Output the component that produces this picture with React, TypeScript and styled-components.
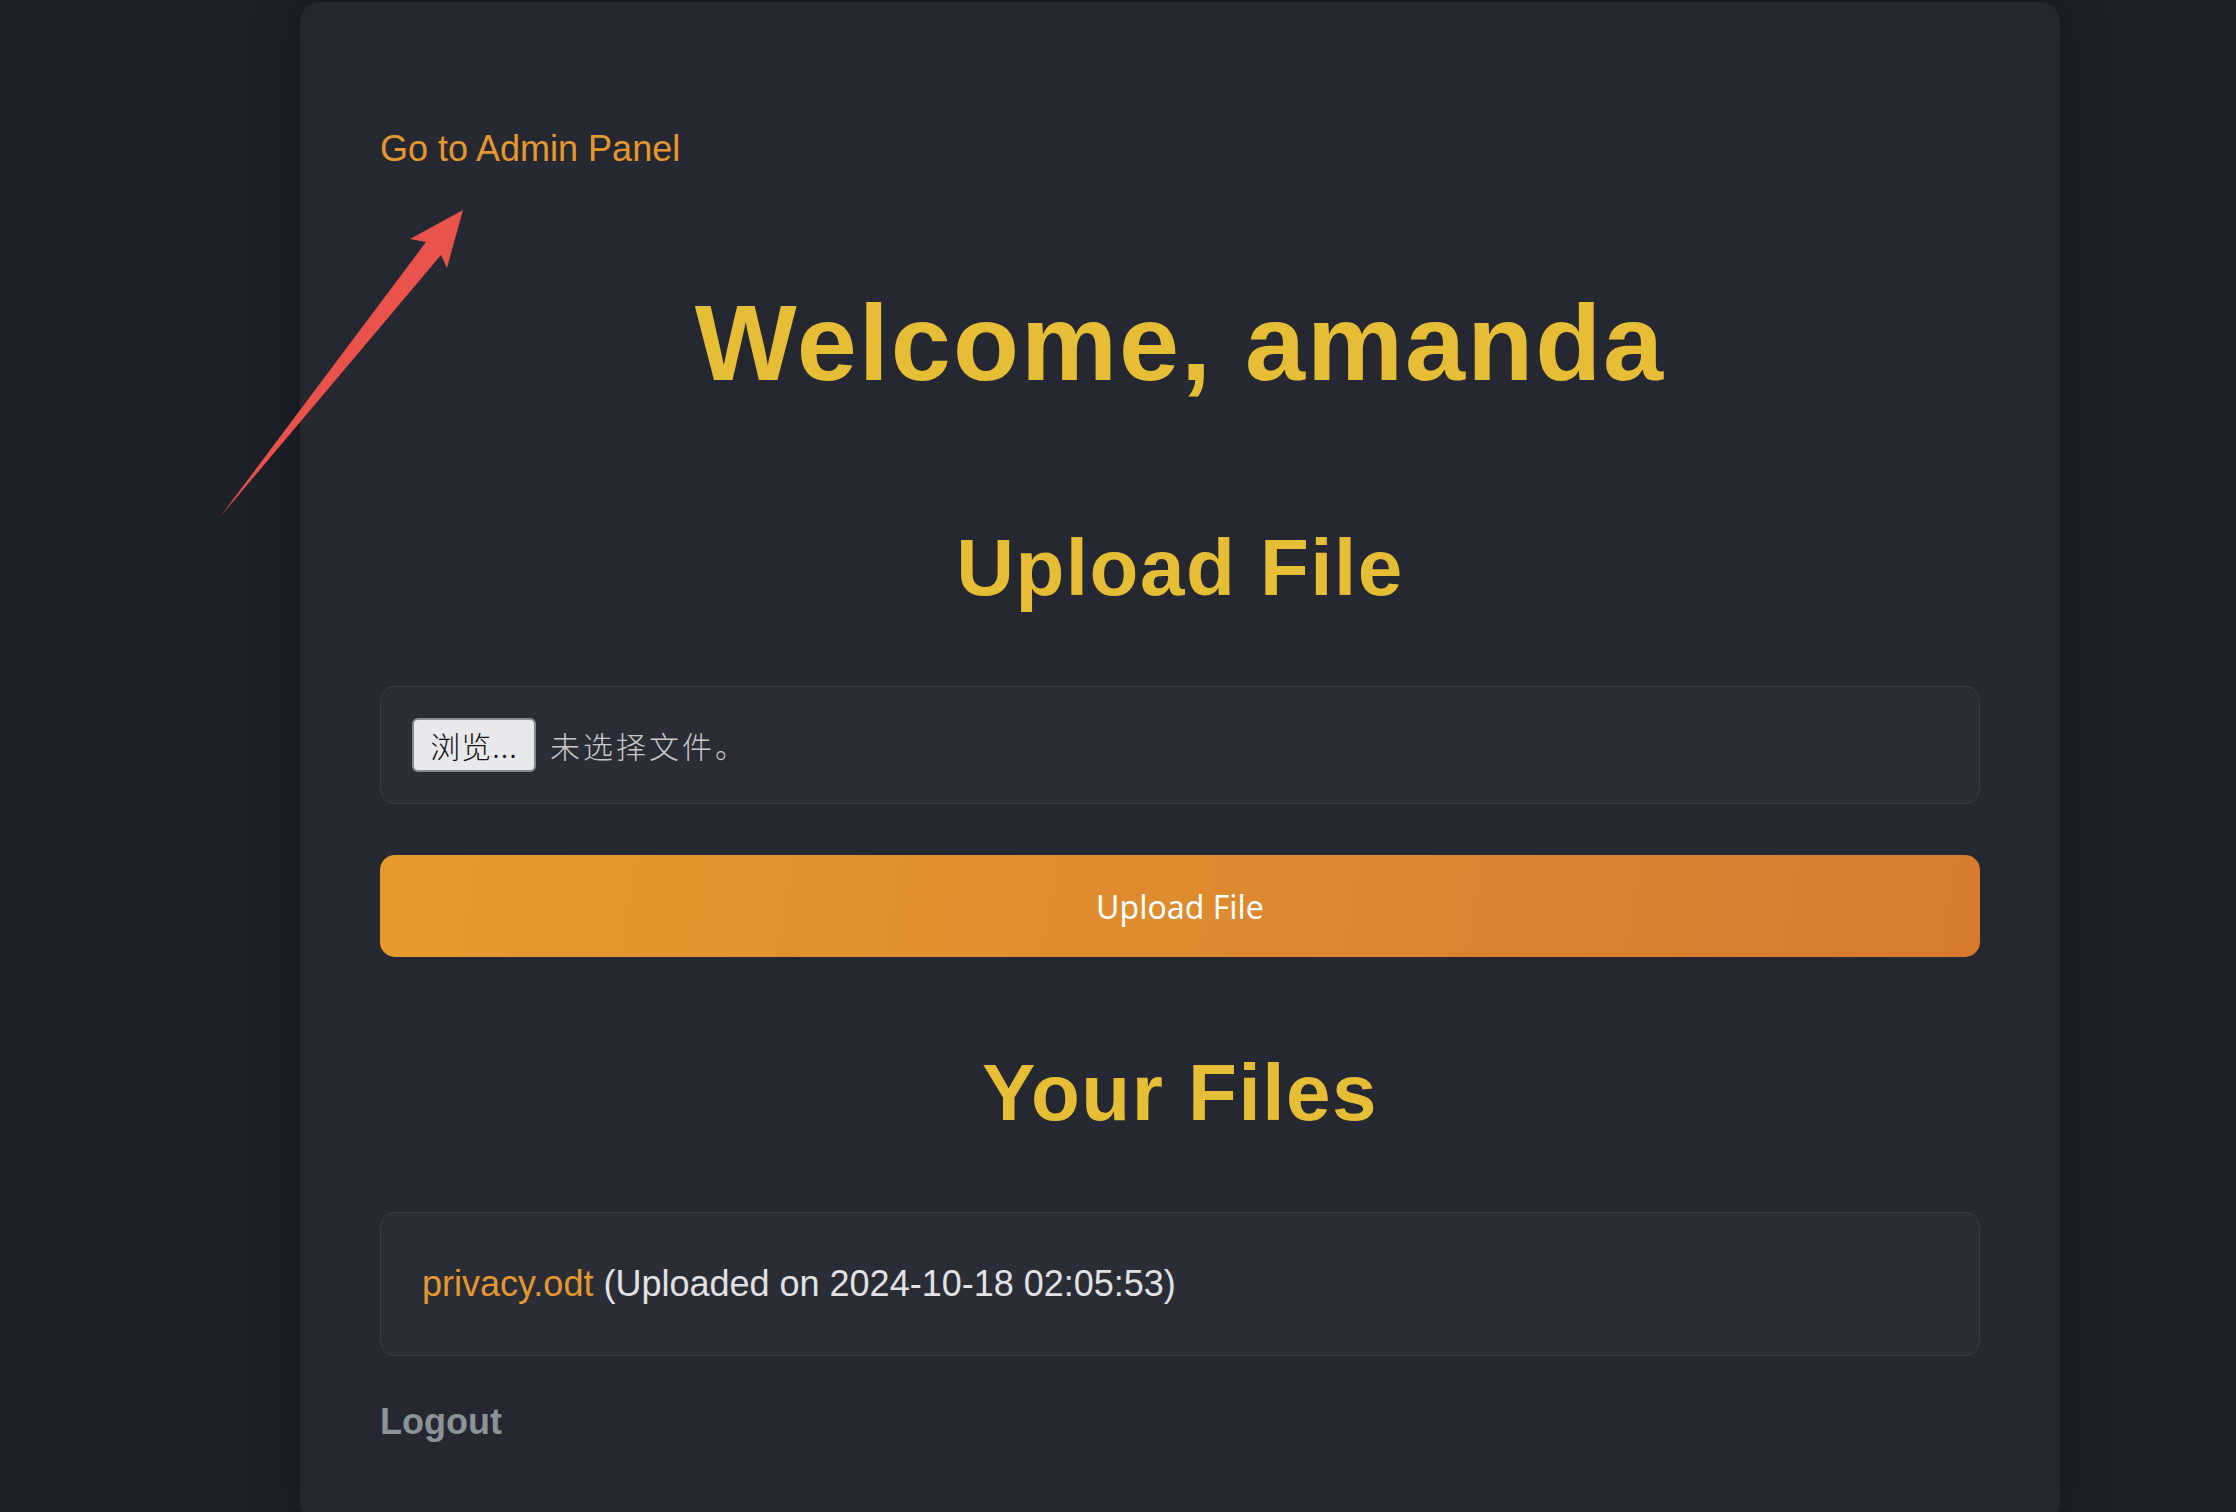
import React from 'react';
import styled, { createGlobalStyle } from 'styled-components';

const GlobalStyle = createGlobalStyle`
  html, body {
    margin: 0;
    padding: 0;
    background: #1e2028;
    font-family: "Liberation Sans", Arial, sans-serif;
  }
`;

const Page = styled.div`
  position: relative;
  min-height: 1512px;
  padding: 2px 0 0 300px;
  box-sizing: border-box;
  overflow: hidden;
`;

const Card = styled.main`
  width: 1760px;
  box-sizing: border-box;
  background: #252830;
  border-radius: 20px;
  box-shadow: 0 0 48px rgba(0, 0, 0, 0.35);
  padding: 126px 80px 80px;
  display: flex;
  flex-direction: column;
`;

const AdminLink = styled.a`
  align-self: flex-start;
  font-size: 36px;
  line-height: 42px;
  color: #e5982f;
  text-decoration: none;
`;

const Heading = styled.h1<{ $size: number; $gap: number; $spacing: number }>`
  margin: ${({ $gap }) => $gap}px 0 0;
  text-align: center;
  font-weight: 700;
  color: #e6be36;
  font-size: ${({ $size }) => $size}px;
  line-height: ${({ $size }) => Math.round($size * 1.15)}px;
  letter-spacing: ${({ $spacing }) => $spacing}px;
`;

const FileBox = styled.div`
  margin-top: 72px;
  height: 118px;
  box-sizing: border-box;
  border: 1.5px solid #3b3d42;
  border-radius: 15px;
  background: #2a2d35;
  padding: 0 31px;
  display: flex;
  align-items: center;
  gap: 14px;
  font-family: "Noto Sans CJK SC", sans-serif;
`;

const BrowseButton = styled.span`
  width: 124px;
  height: 54px;
  box-sizing: border-box;
  border: 2px solid #8a8a96;
  border-radius: 6px;
  background: #e9e8ed;
  color: #111;
  font-size: 30px;
  font-weight: 300;
  display: flex;
  align-items: center;
  justify-content: center;
  letter-spacing: 1px;
`;

const NoFile = styled.span`
  color: #c9c9cc;
  font-size: 30px;
  font-weight: 300;
  letter-spacing: 3px;
`;

const UploadButton = styled.button`
  margin-top: 51px;
  height: 102px;
  border: none;
  border-radius: 15px;
  background: linear-gradient(100deg, #e69a2e 0%, #d67a30 100%);
  color: #ffffff;
  font-family: "Noto Sans", sans-serif;
  font-size: 32px;
  cursor: pointer;
`;

const FileList = styled.ul`
  list-style: none;
  margin: 73px 0 0;
  padding: 0;
`;

const FileItem = styled.li`
  border: 1.5px solid #3b3d42;
  border-radius: 15px;
  background: #2a2d35;
  padding: 50px 41px 50px;
  font-size: 36px;
  line-height: 42px;
  color: #e2e2e4;
`;

const FileLink = styled.a`
  color: #e5982f;
  text-decoration: none;
`;

const Logout = styled.a`
  align-self: flex-start;
  margin-top: 45px;
  font-size: 36px;
  line-height: 42px;
  font-weight: 700;
  color: #8a9497;
  text-decoration: none;
`;

const Arrow = styled.svg`
  position: absolute;
  left: 0;
  top: 0;
  pointer-events: none;
`;

export default function App() {
  return (
    <>
      <GlobalStyle />
      <Page>
        <Card>
          <AdminLink href="#">Go to Admin Panel</AdminLink>
          <Heading $size={108} $gap={111} $spacing={2}>Welcome, amanda</Heading>
          <Heading $size={80} $gap={117} $spacing={1.5}>Upload File</Heading>
          <FileBox>
            <BrowseButton>浏览...</BrowseButton>
            <NoFile>未选择文件。</NoFile>
          </FileBox>
          <UploadButton>Upload File</UploadButton>
          <Heading $size={80} $gap={90} $spacing={1.5}>Your Files</Heading>
          <FileList>
            <FileItem>
              <FileLink href="#">privacy.odt</FileLink> (Uploaded on 2024-10-18 02:05:53)
            </FileItem>
          </FileList>
          <Logout href="#">Logout</Logout>
        </Card>
        <Arrow width="2236" height="1512" viewBox="0 0 2236 1512">
          <polygon
            points="220,517 426,242 410,239 463,210 447,268 441,255"
            fill="#e9534b"
          />
        </Arrow>
      </Page>
    </>
  );
}
